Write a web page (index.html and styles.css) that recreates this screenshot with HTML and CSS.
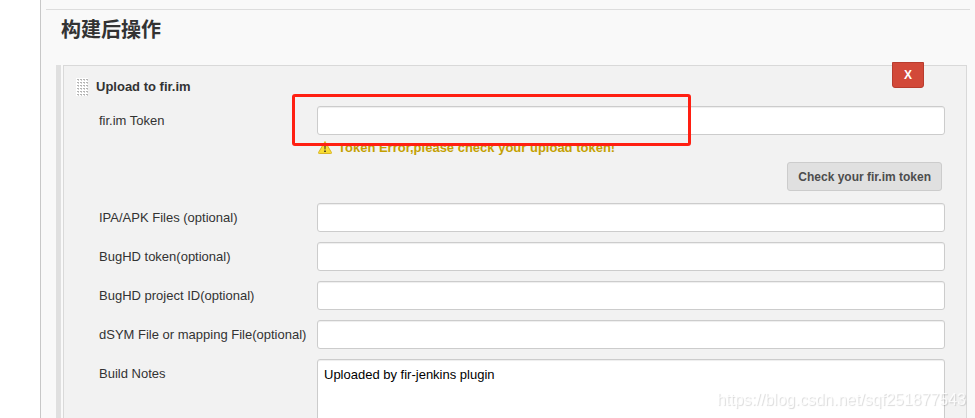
FILE: index.html
```html
<!DOCTYPE html>
<html lang="zh-CN">
<head>
  <meta charset="UTF-8">
  <meta name="viewport" content="width=device-width, initial-scale=1.0">
  <title>构建后操作</title>
  <link rel="stylesheet" href="styles.css">
</head>
<body>

<div class="page">
  <main class="config">
    <h2 class="section-title">构建后操作</h2>

    <!-- Post-build step -->
    <div class="step">
      <form class="step-body">
        <button type="button" class="delete-button" aria-label="Delete">X</button>

        <div class="step-header">
          <svg class="drag-handle" width="12" height="18" viewBox="0 0 12 18" aria-hidden="true">
            <defs>
              <pattern id="grip" width="3" height="3" patternUnits="userSpaceOnUse">
                <rect width="3" height="3" fill="#fff"/>
                <rect x="1" y="1" width="2" height="1" fill="#b4b4b4"/>
                <rect x="2" y="2" width="1" height="1" fill="#cfcfcf"/>
              </pattern>
            </defs>
            <rect width="12" height="18" fill="url(#grip)"/>
          </svg>
          <b>Upload to fir.im</b>
        </div>

        <div class="row token-row">
          <label for="token">fir.im Token</label>
          <input type="text" id="token">
          <span class="highlight"></span>
        </div>

        <div class="validation">
          <svg width="16" height="16" viewBox="0 0 16 16" aria-hidden="true">
            <path d="M8 1.5 L14.5 12.5 Q14.8 13.5 13.8 13.5 H2.2 Q1.2 13.5 1.5 12.5 Z" fill="#f8dc32" stroke="#d8b526"/>
            <path d="M7.2 5.5 H8.8 L8.5 9.5 H7.5 Z" fill="#5a4c20"/>
            <rect x="7" y="10.5" width="2" height="1.5" fill="#5a4c20"/>
          </svg>
          <span>Token Error,please check your upload token!</span>
        </div>

        <div class="actions">
          <button type="button" class="check-button">Check your fir.im token</button>
        </div>

        <div class="row">
          <label for="files">IPA/APK Files (optional)</label>
          <input type="text" id="files">
        </div>
        <div class="row">
          <label for="bughdToken">BugHD token(optional)</label>
          <input type="text" id="bughdToken">
        </div>
        <div class="row">
          <label for="bughdProject">BugHD project ID(optional)</label>
          <input type="text" id="bughdProject">
        </div>
        <div class="row">
          <label for="dsym">dSYM File or mapping File(optional)</label>
          <input type="text" id="dsym">
        </div>
        <div class="row">
          <label for="notes">Build Notes</label>
          <textarea id="notes" rows="6">Uploaded by fir-jenkins plugin</textarea>
        </div>
      </form>
    </div>
  </main>
</div>

<div class="watermark">https://blog.csdn.net/sqf251877543</div>

</body>
</html>
```
FILE: styles.css
```css
* {
  box-sizing: border-box;
}

body {
  margin: 0;
  background: #fff;
  color: #333;
  font-family: "Liberation Sans", Arial, "Noto Sans CJK SC", sans-serif;
  font-size: 13px;
  line-height: 18px;
}

.page {
  height: 100vh;
  padding-left: 40px;
  overflow: hidden;
}

.config {
  min-height: 100%;
  padding: 9px 5px 0;
  border-left: 1px solid #c8c8c8;
  background: #f9f9f9;
}

.section-title {
  margin: 0;
  padding: 5px 15px 0;
  border-top: 1px solid #ddd;
  font-size: 20px;
  line-height: 30px;
}

/* Thick bar down the left of each step */
.step {
  margin: 20px 3px 0 10px;
  padding-left: 2px;
  border-left: 5px solid #e0e0e0;
}

.step-body {
  position: relative;
  padding: 12px 21px 20px 12px;
  border: 1px solid #d9d9d9;
  background: #f2f2f2;
}

.delete-button {
  position: absolute;
  top: -4px;
  right: 42px;
  width: 32px;
  height: 26px;
  padding: 0;
  border: 1px solid #b83c2e;
  border-radius: 0 0 3px 3px;
  background: #d24939;
  color: #fff;
  font: bold 12px "Liberation Sans", Arial, sans-serif;
  cursor: pointer;
}

.step-header {
  display: flex;
  gap: 8px;
  margin-bottom: 10px;
}

.row {
  display: grid;
  grid-template-columns: 218px 1fr;
  align-items: start;
  margin: 0 0 10px 23px;
}

.row label {
  padding-top: 6px;
  white-space: nowrap;
}

.row input,
.row textarea {
  display: block;
  width: 100%;
  padding: 6px;
  border: 1px solid #ccc;
  border-radius: 3px;
  background: #fff;
  box-shadow: inset 0 1px 1px rgba(0, 0, 0, 0.07);
  color: #000;
  font: 13px/18px "Liberation Sans", Arial, sans-serif;
}

.row input {
  height: 29px;
}

.row textarea {
  resize: none;
}

.token-row {
  position: relative;
  margin-bottom: 5px;
}

/* Red frame round the token field */
.highlight {
  position: absolute;
  top: -12px;
  left: 193px;
  width: 399px;
  height: 52px;
  border: 3px solid #ff1f12;
  border-radius: 3px;
  pointer-events: none;
  z-index: 1;
}

.validation {
  display: flex;
  align-items: center;
  gap: 5px;
  margin-left: 241px;
  color: #c4a000;
  font-weight: bold;
  line-height: 16px;
}

.actions {
  display: flex;
  justify-content: flex-end;
  margin: 6px 3px 12px 0;
}

.check-button {
  height: 29px;
  padding: 0 10px;
  border: 1px solid #ccc;
  border-radius: 3px;
  background: #e0e0e0;
  color: #4d4d4d;
  font: bold 12px "Liberation Sans", Arial, sans-serif;
  cursor: pointer;
}

.watermark {
  position: fixed;
  right: 9px;
  bottom: 8px;
  color: rgba(255, 255, 255, 0.8);
  font-size: 16px;
  line-height: 20px;
  text-shadow: 1px 1px 1px rgba(0, 0, 0, 0.15);
  pointer-events: none;
}
```
